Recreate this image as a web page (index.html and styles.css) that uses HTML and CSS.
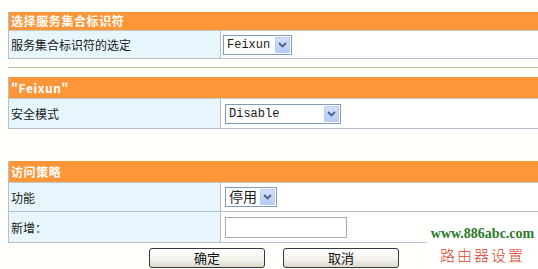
FILE: index.html
```html
<!DOCTYPE html>
<html lang="zh-CN">
<head>
  <meta charset="UTF-8" />
  <title>无线设置</title>
  <link rel="stylesheet" href="styles.css">
</head>
<body>
  <!-- 选择服务集合标识符 -->
  <div class="panel">
    <div class="panel-head">选择服务集合标识符</div>
    <div class="row row-ssid">
      <div class="label">服务集合标识符的选定</div>
      <div class="field">
        <div class="select select-ssid">
          <span class="select-text mono">Feixun</span>
          <span class="select-arrow"><svg width="9" height="6" viewBox="0 0 9 6"><path d="M1 1 L4.5 4.5 L8 1" fill="none" stroke="#4d6185" stroke-width="1.8"/></svg></span>
        </div>
      </div>
    </div>
  </div>
  <div class="rule"></div>

  <!-- Feixun -->
  <div class="panel panel-second">
    <div class="panel-head tall">"Feixun"</div>
    <div class="row row-mode">
      <div class="label">安全模式</div>
      <div class="field">
        <div class="select select-mode">
          <span class="select-text mono">Disable</span>
          <span class="select-arrow"><svg width="9" height="6" viewBox="0 0 9 6"><path d="M1 1 L4.5 4.5 L8 1" fill="none" stroke="#4d6185" stroke-width="1.8"/></svg></span>
        </div>
      </div>
    </div>
  </div>

  <!-- 访问策略 -->
  <div class="panel panel-third">
    <div class="panel-head tall">访问策略</div>
    <div class="row row-func">
      <div class="label">功能</div>
      <div class="field">
        <div class="select select-func">
          <span class="select-text cjk">停用</span>
          <span class="select-arrow"><svg width="9" height="6" viewBox="0 0 9 6"><path d="M1 1 L4.5 4.5 L8 1" fill="none" stroke="#4d6185" stroke-width="1.8"/></svg></span>
        </div>
      </div>
    </div>
    <div class="row row-add">
      <div class="label">新增：</div>
      <div class="field">
        <div class="text-input"></div>
      </div>
    </div>
  </div>

  <div class="actions">
    <button class="btn">确定</button>
    <button class="btn">取消</button>
  </div>

  <div class="watermark">
    <div class="wm-url">www.886abc.com</div>
    <div class="wm-name">路由器设置</div>
  </div>
</body>
</html>
```

FILE: styles.css
```css
/* 基础 */
* {
  margin: 0;
  padding: 0;
  box-sizing: border-box;
}
html, body {
  width: 538px;
  height: 269px;
  overflow: hidden;
}
body {
  background: #fffffb;
  font-family: "Noto Sans CJK SC", "DejaVu Sans", sans-serif;
  font-size: 12px;
  color: #1a1a1a;
  padding: 12px 0 0 8px;
  position: relative;
}
/* 面板 */
.panel {
  width: 532px;
  border-left: 1px solid #b4c0cc;
}
.panel-second {
  margin-top: 9px;
}
.panel-third {
  margin-top: 32px;
}
.panel-head {
  height: 18px;
  line-height: 18px;
  background: #fd9639;
  color: #fff;
  font-weight: bold;
  padding-left: 2px;
  letter-spacing: 0.6px;
}
.panel-head.tall {
  height: 21px;
  line-height: 21px;
}
.row {
  display: flex;
  border-top: 1px solid #c3c7c8;
  border-bottom: 1px solid #b4c0cc;
}
.row + .row {
  border-top: none;
}
.row-ssid { height: 29px; }
.row-mode { height: 31px; }
.row-func { height: 30px; }
.row-add { height: 31px; }
.label {
  width: 212px;
  background: #e7f5fd;
  border-right: 1px solid #b4c0cc;
  display: flex;
  align-items: center;
  padding-left: 2px;
}
.field {
  flex: 1;
  background: #fff;
  display: flex;
  align-items: center;
  padding-left: 3px;
}
.rule {
  width: 530px;
  height: 1px;
  margin-top: 8px;
  background: #c8b89c;
}
/* 下拉框 */
.select {
  display: flex;
  height: 20px;
  border: 1px solid #7f9db9;
  background: #fff;
}
.select-ssid { width: 69px; margin-left: -1px; }
.select-mode { width: 116px; margin-left: 1px; }
.select-func { width: 52px; margin-left: 1px; }
.select-text {
  flex: 1;
  padding-left: 3px;
  line-height: 18px;
}
.mono {
  font-family: "Liberation Mono", "Courier New", monospace;
  font-size: 12px;
}
.cjk {
  font-size: 14px;
  line-height: 17px;
}
.select-arrow {
  width: 15px;
  margin: 1px;
  border: 1px solid #b8cdf6;
  border-radius: 1px;
  background: linear-gradient(#d2e0fd, #b6cbf7);
  display: flex;
  align-items: center;
  justify-content: center;
}
.text-input {
  width: 122px;
  height: 21px;
  margin-left: 1px;
  border: 1px solid #a5acb2;
  background: #fff;
}
/* 按钮 */
.actions {
  width: 532px;
  display: flex;
  justify-content: center;
  gap: 18px;
  margin-top: 5px;
}
.btn {
  width: 116px;
  height: 20px;
  border: 1px solid #2f3a44;
  border-radius: 3px;
  background: linear-gradient(#ffffff, #f2f1ea 60%, #dcd9cc);
  font-family: "Noto Sans CJK SC", sans-serif;
  font-size: 13px;
  line-height: 16px;
  color: #111;
}
/* 水印 */
.watermark {
  position: absolute;
  left: 427px;
  top: 226px;
  width: 111px;
  height: 43px;
  background: #fff;
  text-align: center;
}
.wm-url {
  font-family: "Liberation Serif", "Times New Roman", serif;
  font-weight: bold;
  font-size: 14px;
  line-height: 15px;
  color: #2b7a2e;
}
.wm-name {
  margin-top: 5px;
  font-family: "Noto Sans CJK SC", sans-serif;
  font-size: 15px;
  line-height: 17px;
  letter-spacing: 2px;
  color: #d8452c;
  font-weight: 300;
}
```
